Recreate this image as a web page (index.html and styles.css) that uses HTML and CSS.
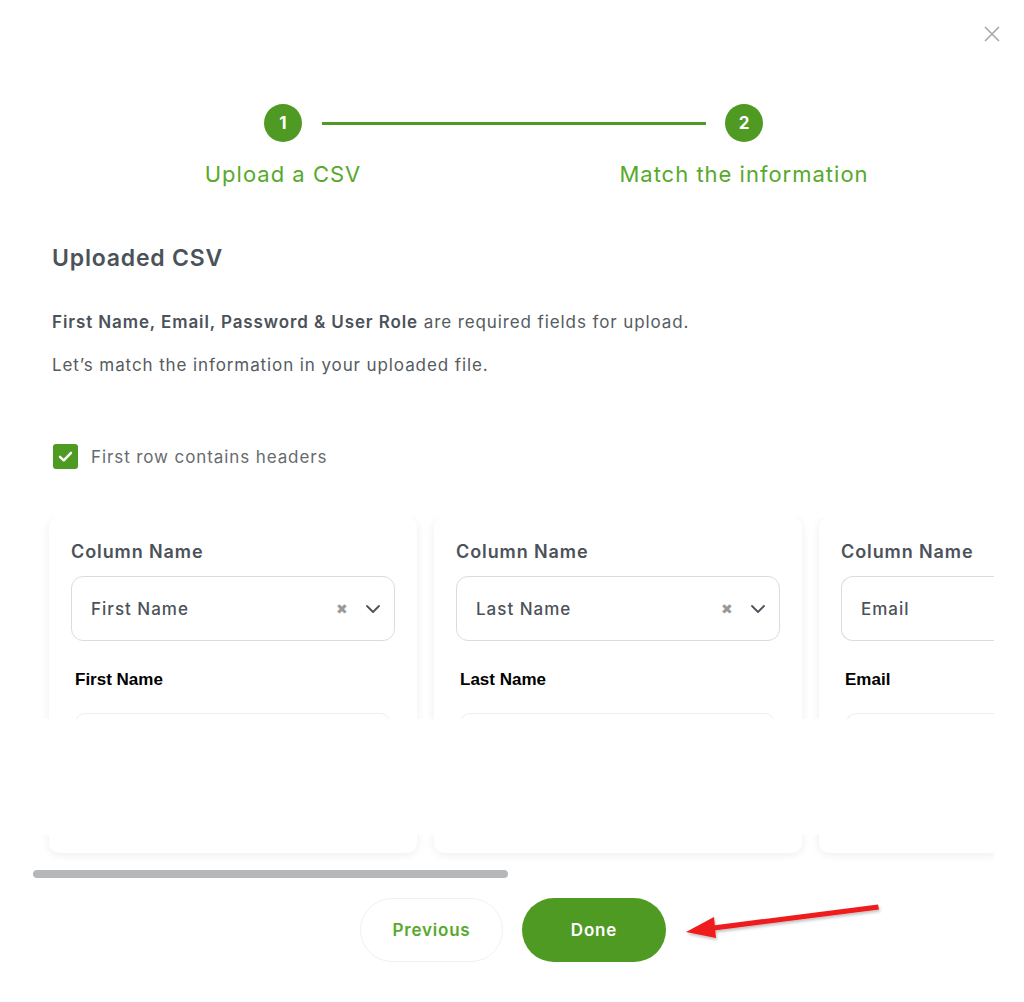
FILE: index.html
```html
<!DOCTYPE html>
<html lang="en">
<head>
  <meta charset="UTF-8">
  <meta name="viewport" content="width=device-width, initial-scale=1.0">
  <title>Import Users</title>
  <link rel="stylesheet" href="styles.css">
</head>
<body>
  <div class="modal">
    <button class="close-btn" aria-label="Close">
      <svg width="18" height="18" viewBox="0 0 18 18"><path d="M2 2 L16 16 M16 2 L2 16" stroke="#a8a8a8" stroke-width="1.6" fill="none"/></svg>
    </button>

    <div class="stepper">
      <div class="step-row">
        <div class="step-circle">1</div>
        <div class="step-line"></div>
        <div class="step-circle">2</div>
      </div>
      <div class="label-row">
        <div class="step-label">Upload a CSV</div>
        <div class="step-label">Match the information</div>
      </div>
    </div>

    <div class="content">
      <h2>Uploaded CSV</h2>
      <p class="info"><strong>First Name, Email, Password &amp; User Role</strong> are required fields for upload.</p>
      <p class="info">Let’s match the information in your uploaded file.</p>

      <label class="check">
        <span class="check-box">
          <svg width="17" height="17" viewBox="0 0 17 17"><path d="M3 8.8 L6.8 12.4 L14 4.8" stroke="#fff" stroke-width="2.4" fill="none" stroke-linecap="round" stroke-linejoin="round"/></svg>
        </span>
        First row contains headers
      </label>
    </div>

    <div class="cards-wrap">
      <div class="cards">
        <div class="card">
          <div class="col-label">Column Name</div>
          <div class="select">
            <span class="select-value">First Name</span>
            <span class="clear">&#x2716;</span>
            <svg class="chevron" width="18" height="18" viewBox="0 0 18 18"><path d="M3 6 L9 12 L15 6" stroke="#4b5259" stroke-width="1.8" fill="none" stroke-linecap="round" stroke-linejoin="round"/></svg>
          </div>
          <div class="field-name">First Name</div>
          <div class="field-box"></div>
        </div>
        <div class="card">
          <div class="col-label">Column Name</div>
          <div class="select">
            <span class="select-value">Last Name</span>
            <span class="clear">&#x2716;</span>
            <svg class="chevron" width="18" height="18" viewBox="0 0 18 18"><path d="M3 6 L9 12 L15 6" stroke="#4b5259" stroke-width="1.8" fill="none" stroke-linecap="round" stroke-linejoin="round"/></svg>
          </div>
          <div class="field-name">Last Name</div>
          <div class="field-box"></div>
        </div>
        <div class="card card-clipped">
          <div class="col-label">Column Name</div>
          <div class="select">
            <span class="select-value">Email</span>
          </div>
          <div class="field-name">Email</div>
          <div class="field-box"></div>
        </div>
      </div>
      <div class="cards-mask"></div>
    </div>

    <div class="scrollbar"><div class="scroll-thumb"></div></div>

    <div class="actions">
      <button class="btn btn-outline">Previous</button>
      <button class="btn btn-primary">Done</button>
    </div>

    <svg class="annotation" width="220" height="60" viewBox="0 0 220 60">
      <defs>
        <filter id="sh" x="-10%" y="-40%" width="120%" height="180%">
          <feDropShadow dx="1" dy="2" stdDeviation="1.5" flood-color="#000" flood-opacity="0.25"/>
        </filter>
      </defs>
      <g filter="url(#sh)" fill="#ee1c1c">
        <path d="M194 14.5 L195 19.5 L30 40.5 L29 35.5 Z"/>
        <path d="M2 42 L30 27 L32 48 Z"/>
      </g>
    </svg>
  </div>
</body>
</html>
```

FILE: styles.css
```css
body {
  margin: 0;
  background-color: #ffffff;
  font-family: Inter, "Open Sans", sans-serif;
  color: #4b5259;
}
.modal {
  position: relative;
  width: 1024px;
  height: 1002px;
  padding-top: 104px;
  box-sizing: border-box;
}
.close-btn {
  position: absolute;
  top: 25px;
  right: 23px;
  background: none;
  border: none;
  padding: 0;
  cursor: pointer;
}
.step-row {
  display: flex;
  align-items: center;
  margin-left: 264px;
}
.step-circle {
  width: 38px;
  height: 38px;
  border-radius: 50%;
  background-color: #4e9a23;
  color: #ffffff;
  font-weight: 700;
  font-size: 17px;
  display: flex;
  align-items: center;
  justify-content: center;
}
.step-line {
  width: 384px;
  height: 3px;
  background-color: #4e9a23;
  margin: 0 19px 0 20px;
}
.label-row {
  display: flex;
  gap: 161px;
  margin-left: 133px;
  margin-top: 18px;
}
.step-label {
  width: 300px;
  text-align: center;
  font-size: 22px;
  line-height: 28px;
  color: #57a92b;
  letter-spacing: 1px;
}
.content {
  padding-left: 52px;
  margin-top: 56px;
}
h2 {
  margin: 0;
  font-size: 23px;
  line-height: 28px;
  font-weight: 600;
  letter-spacing: 0.8px;
  color: #4b5259;
}
.info {
  margin: 0;
  font-size: 17px;
  line-height: 22px;
  letter-spacing: 0.9px;
  color: #555b61;
}
h2 + .info {
  margin-top: 39px;
}
.info + .info {
  margin-top: 21px;
}
.info strong {
  font-weight: 600;
  color: #4b5259;
}
.check {
  display: flex;
  align-items: center;
  gap: 13px;
  margin-top: 68px;
  margin-left: 1px;
  font-size: 17px;
  letter-spacing: 0.9px;
  color: #666b70;
}
.check-box {
  width: 25px;
  height: 25px;
  border-radius: 3px;
  background-color: #4e9a23;
  display: flex;
  align-items: center;
  justify-content: center;
}
.cards-wrap {
  position: relative;
  width: 961px;
  margin-left: 33px;
  margin-top: 48px;
  overflow: hidden;
  padding: 0 0 0 16px;
  box-sizing: border-box;
}
.cards {
  display: flex;
  gap: 17px;
  padding-bottom: 8px;
}
.card {
  flex-shrink: 0;
  width: 368px;
  height: 336px;
  box-sizing: border-box;
  padding: 24px 22px 0;
  background-color: #ffffff;
  border-radius: 10px;
  box-shadow: 0 2px 10px rgba(0, 0, 0, 0.07);
}
.card-clipped {
  width: 180px;
  border-radius: 10px 0 0 10px;
  padding-right: 0;
}
.card-clipped .select,
.card-clipped .field-box {
  border-right: none;
  border-radius: 12px 0 0 12px;
  margin-right: 0;
}
.cards-mask {
  position: absolute;
  left: 0;
  right: 0;
  top: 202px;
  height: 116px;
  background-color: #ffffff;
}
.col-label {
  font-size: 18px;
  line-height: 22px;
  font-weight: 600;
  letter-spacing: 0.9px;
  color: #4b5259;
}
.select {
  display: flex;
  align-items: center;
  height: 65px;
  margin-top: 13px;
  box-sizing: border-box;
  border: 1px solid #dcdcdc;
  border-radius: 12px;
  padding: 0 12px 0 19px;
}
.select-value {
  flex: 1;
  font-size: 17px;
  font-weight: 500;
  letter-spacing: 1px;
  color: #4b5259;
}
.clear {
  font-size: 14px;
  color: #999999;
  margin-right: 16px;
}
.field-name {
  font-family: "Liberation Sans", Arial, sans-serif;
  font-weight: 700;
  font-size: 17px;
  line-height: 22px;
  color: #000000;
  margin: 28px 0 0 4px;
}
.field-box {
  height: 60px;
  margin: 22px 5px 0 4px;
  border: 1px solid #eeeeee;
  border-radius: 10px;
}
.scrollbar {
  width: 961px;
  margin: 9px 0 0 33px;
  height: 8px;
}
.scroll-thumb {
  width: 475px;
  height: 8px;
  border-radius: 4px;
  background-color: #b5b8bb;
}
.actions {
  display: flex;
  justify-content: center;
  gap: 19px;
  margin-top: 20px;
  padding-left: 2px;
}
.btn {
  width: 144px;
  height: 64px;
  border-radius: 32px;
  font-family: Inter, "Open Sans", sans-serif;
  font-size: 17px;
  font-weight: 600;
  letter-spacing: 0.8px;
  cursor: pointer;
}
.btn-outline {
  width: 143px;
  background-color: #ffffff;
  border: 1px solid #ecf4ee;
  color: #57a92b;
}
.btn-primary {
  background-color: #4e9a23;
  border: none;
  color: #ffffff;
}
.annotation {
  position: absolute;
  left: 684px;
  top: 890px;
}
```
